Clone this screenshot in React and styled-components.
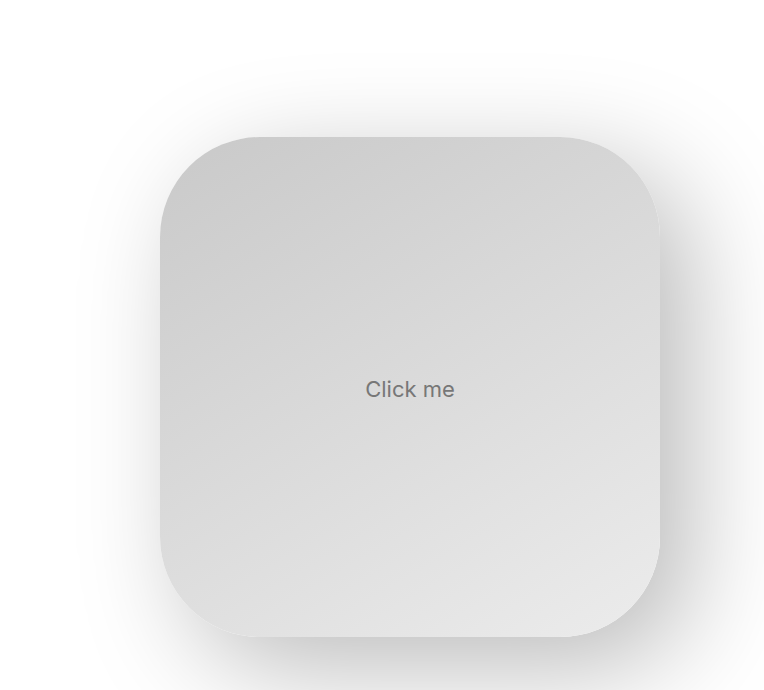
import styled, { createGlobalStyle } from "styled-components";

const GlobalStyle = createGlobalStyle`
  html, body {
    margin: 0;
    padding: 0;
    background: #ffffff;
  }
`;

const Page = styled.main`
  width: 764px;
  height: 690px;
  box-sizing: border-box;
  padding: 137px 0 0 160px;
  background: #ffffff;
  overflow: hidden;
`;

const NeuButton = styled.button`
  width: 500px;
  height: 500px;
  border: none;
  border-radius: 100px;
  display: flex;
  align-items: center;
  justify-content: center;
  background: linear-gradient(150deg, #c9c9c9, #ececec);
  box-shadow: 30px 30px 110px rgba(0, 0, 0, 0.27);
  font-family: Inter, "Liberation Sans", sans-serif;
  font-size: 22px;
  color: #777777;
  cursor: pointer;
  padding: 3px 0 0;
`;

const App = () => {
  return (
    <>
      <GlobalStyle />
      <Page>
        <NeuButton>Click me</NeuButton>
      </Page>
    </>
  );
};

export default App;
